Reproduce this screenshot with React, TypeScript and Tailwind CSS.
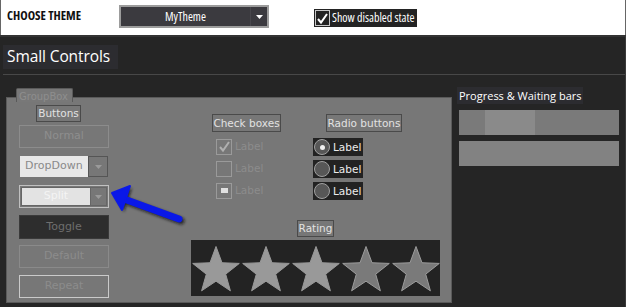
import React from "react";

function starPoints(cx: number, cy: number, R: number, r: number) {
  const pts: string[] = [];
  for (let i = 0; i < 10; i++) {
    const rad = i % 2 === 0 ? R : r;
    const a = (Math.PI / 5) * i - Math.PI / 2;
    pts.push(`${(cx + rad * Math.cos(a)).toFixed(2)},${(cy + rad * Math.sin(a)).toFixed(2)}`);
  }
  return pts.join(" ");
}

function Tri({ color }: { color: string }) {
  return (
    <svg width="7" height="4" viewBox="0 0 7 4">
      <polygon points="0,0 7,0 3.5,4" fill={color} />
    </svg>
  );
}

function Check({ color, size = 13 }: { color: string; size?: number }) {
  return (
    <svg width={size} height={size} viewBox="0 0 13 13">
      <polyline points="2,7 5,10.5 11,2" fill="none" stroke={color} strokeWidth="2" />
    </svg>
  );
}

export default function App() {
  const ui = "font-['Open_Sans',sans-serif]";
  const dv = "font-['DejaVu_Sans',sans-serif]";
  return (
    <div className={`relative w-[626px] h-[307px] overflow-hidden bg-[#252525] flex flex-col ${ui}`}>
      {/* header */}
      <div className="h-[35px] shrink-0 bg-white border-x border-[#666] flex items-start">
        <span className="mt-[8px] ml-[6px] w-[112px] whitespace-nowrap text-[12.5px] leading-[16px] font-bold font-stretch-[82%] text-[#111]">
          CHOOSE THEME
        </span>
        <div className="mt-[5px] w-[150px] h-[23px] border-2 border-[#9c9c9c] bg-[#3b3a3f] flex items-center">
          <span className="flex-1 text-center text-white text-[12px] font-stretch-[75%] leading-none">MyTheme</span>
          <div className="w-px h-full bg-[#48474c]" />
          <div className="w-[16px] flex justify-center">
            <Tri color="#ffffff" />
          </div>
        </div>
        <div className="mt-[9px] ml-[45px] h-[18px] bg-[#232323] flex items-center pl-px pr-[2px]">
          <div className="w-[15px] h-[16px] border border-[#c8c8c8] flex items-center justify-center">
            <Check color="#ffffff" />
          </div>
          <span className="ml-[2px] whitespace-nowrap text-white text-[12px] font-stretch-[75%] leading-none">Show disabled state</span>
        </div>
      </div>

      {/* body */}
      <div className="flex-1 border-t-2 border-[#333] pt-[8px] flex flex-col border-r border-r-[#3a3a3a]">
        <div className="ml-[3px] w-[115px] h-[24px] bg-[#2c2c30] text-white text-[15.5px] tracking-[-0.1px] pl-[4px] flex items-center">
          Small Controls
        </div>
        <div className="mt-[5px] ml-[3px] h-px bg-[#484848]" />

        <div className="mt-[12px] flex items-start">
          {/* group box */}
          <div className="relative ml-[6px] mt-[10px] w-[446px] h-[206px] border border-[#5a5a5a] bg-[#777777]">
            <div className="absolute left-[9px] top-[-10px] w-[57px] h-[14px] bg-[#787878] border border-b-0 border-[#5a5a5a] rounded-t-[2px]">
              <span className={`absolute left-[2px] top-[1px] whitespace-nowrap text-[10px] leading-[14px] text-[#8e8e8e] ${dv}`}>GroupBox</span>
            </div>

            <div className={`flex items-start pt-[7px] pl-[12px] ${dv}`}>
              {/* buttons column */}
              <div className="w-[90px] flex flex-col">
                <div className="ml-[17px] w-[45px] h-[17px] border border-[#4a4a4a] text-[#e2e2e2] text-[10.5px] flex items-center justify-center leading-none">
                  Buttons
                </div>
                <div className="mt-[3px] h-[23px] border border-[#8c8c8c] text-[#8e8e8e] text-[11px] flex items-center justify-center">
                  Normal
                </div>
                <div className="mt-[8px] ml-px w-[88px] h-[21px] flex">
                  <div className="w-[68px] h-full bg-[#e8e8e8] text-[#8a8a8a] text-[11px] flex items-center pl-[5px]">
                    DropDown
                  </div>
                  <div className="flex-1 h-full border border-[#555] flex items-center justify-center">
                    <Tri color="#9a9a9a" />
                  </div>
                </div>
                <div className="mt-[8px] h-[23px] border border-[#c0c0c0] flex p-px">
                  <div className="w-[70px] h-full bg-[#e3e3e3] border border-[#666] text-[#f4f4f4] text-[11px] flex items-center justify-center">
                    Split
                  </div>
                  <div className="flex-1 h-full border border-[#666] border-l-0 flex items-center justify-center">
                    <Tri color="#9a9a9a" />
                  </div>
                </div>
                <div className="mt-[7px] h-[24px] bg-[#2d2d2d] border border-[#3a3a3a] text-[#6e6e6e] text-[11px] flex items-center justify-center">
                  Toggle
                </div>
                <div className="mt-[6px] h-[23px] border border-[#8a8a8a] text-[#8c8c8c] text-[11px] flex items-center justify-center">
                  Default
                </div>
                <div className="mt-[7px] h-[23px] border border-[#cacaca] text-[#8c8c8c] text-[11px] flex items-center justify-center">
                  Repeat
                </div>
              </div>

              {/* middle column */}
              <div className="ml-[82px] mt-[9px] flex flex-col">
                <div className="flex h-[86px]">
                  <div className="ml-[21px] w-[69px] flex flex-col">
                    <div className="h-[18px] border border-[#4a4a4a] text-[#e2e2e2] text-[10.5px] flex items-center justify-center leading-none">
                      Check boxes
                    </div>
                    <div className="mt-[7px] ml-[4px] flex flex-col gap-[7px]">
                      {[0, 1, 2].map((i) => (
                        <div key={i} className="h-[15px] flex items-center">
                          <div className="w-[16px] h-[16px] border border-[#9a9a9a] flex items-center justify-center">
                            {i === 0 && <Check color="#b0b0b0" />}
                            {i === 2 && <div className="w-[7px] h-[5px] bg-[#e0e0e0]" />}
                          </div>
                          <span className="ml-[3px] text-[10.5px] text-[#8c8c8c] leading-none">Label</span>
                        </div>
                      ))}
                    </div>
                  </div>
                  <div className="ml-[32px] flex flex-col">
                    <div className="ml-[13px] w-[76px] h-[18px] border border-[#4a4a4a] text-[#e2e2e2] text-[10.5px] flex items-center justify-center leading-none">
                      Radio buttons
                    </div>
                    <div className="mt-[6px] flex flex-col gap-[4px]">
                      {[0, 1, 2].map((i) => (
                        <div key={i} className="w-[50px] h-[18px] bg-[#222222] flex items-center pl-px">
                          <div className="w-[16px] h-[16px] rounded-full border border-[#a0a0a0] bg-[#575757] flex items-center justify-center">
                            {i === 0 && <div className="w-[5px] h-[5px] rounded-full bg-[#f0f0f0]" />}
                          </div>
                          <span className="ml-[3px] text-[10.5px] text-[#ececec] leading-none">Label</span>
                        </div>
                      ))}
                    </div>
                  </div>
                </div>
                <div className="mt-[20px] self-center w-[37px] h-[17px] border border-[#4a4a4a] text-[#e2e2e2] text-[10.5px] flex items-center justify-center leading-none">
                  Rating
                </div>
                <div className="mt-[3px] w-[249px] h-[56px] bg-[#232323]">
                  <svg width="249" height="56" viewBox="0 0 249 56">
                    {[0, 1, 2, 3, 4].map((i) => (
                      <polygon
                        key={i}
                        points={starPoints(25 + 50 * i, 31, 24.5, 10.2)}
                        fill={i < 3 ? "#999999" : "#7a7a7a"}
                        stroke={i < 3 ? "#999999" : "#9c9c9c"}
                        strokeWidth="1"
                        strokeLinejoin="miter"
                      />
                    ))}
                  </svg>
                </div>
              </div>
            </div>
          </div>

          {/* right panel */}
          <div className="ml-[5px] flex flex-col">
            <div className="w-[126px] h-[17px] bg-[#2c2c30] whitespace-nowrap text-white text-[11px] pl-[2px] flex items-center leading-none">
              Progress &amp; Waiting bars
            </div>
            <div className="mt-[6px] ml-[2px] w-[160px] h-[25px] bg-[#7a7a7a] flex">
              <div className="ml-[26px] w-[50px] h-full bg-[#8a8a8a]" />
            </div>
            <div className="mt-[6px] ml-[2px] w-[160px] h-[25px] bg-[#828282]" />
          </div>
        </div>
      </div>

      {/* blue arrow overlay */}
      <svg className="absolute left-0 top-0 pointer-events-none" width="626" height="307" viewBox="0 0 626 307">
        <defs>
          <filter id="sh" x="-20%" y="-20%" width="140%" height="140%">
            <feGaussianBlur stdDeviation="1.5" />
          </filter>
        </defs>
        <g transform="translate(2,2)" filter="url(#sh)" opacity="0.75">
          <line x1="124" y1="199" x2="179" y2="219" stroke="#111" strokeWidth="7" strokeLinecap="round" />
          <polygon points="112,193 130,186 122,210" fill="#111" />
        </g>
        <line x1="124" y1="199" x2="179" y2="219" stroke="#0a18e8" strokeWidth="7" strokeLinecap="round" />
        <polygon points="112,193 130,186 122,210" fill="#0a18e8" stroke="#0a18e8" strokeWidth="2" strokeLinejoin="round" />
      </svg>
    </div>
  );
}
